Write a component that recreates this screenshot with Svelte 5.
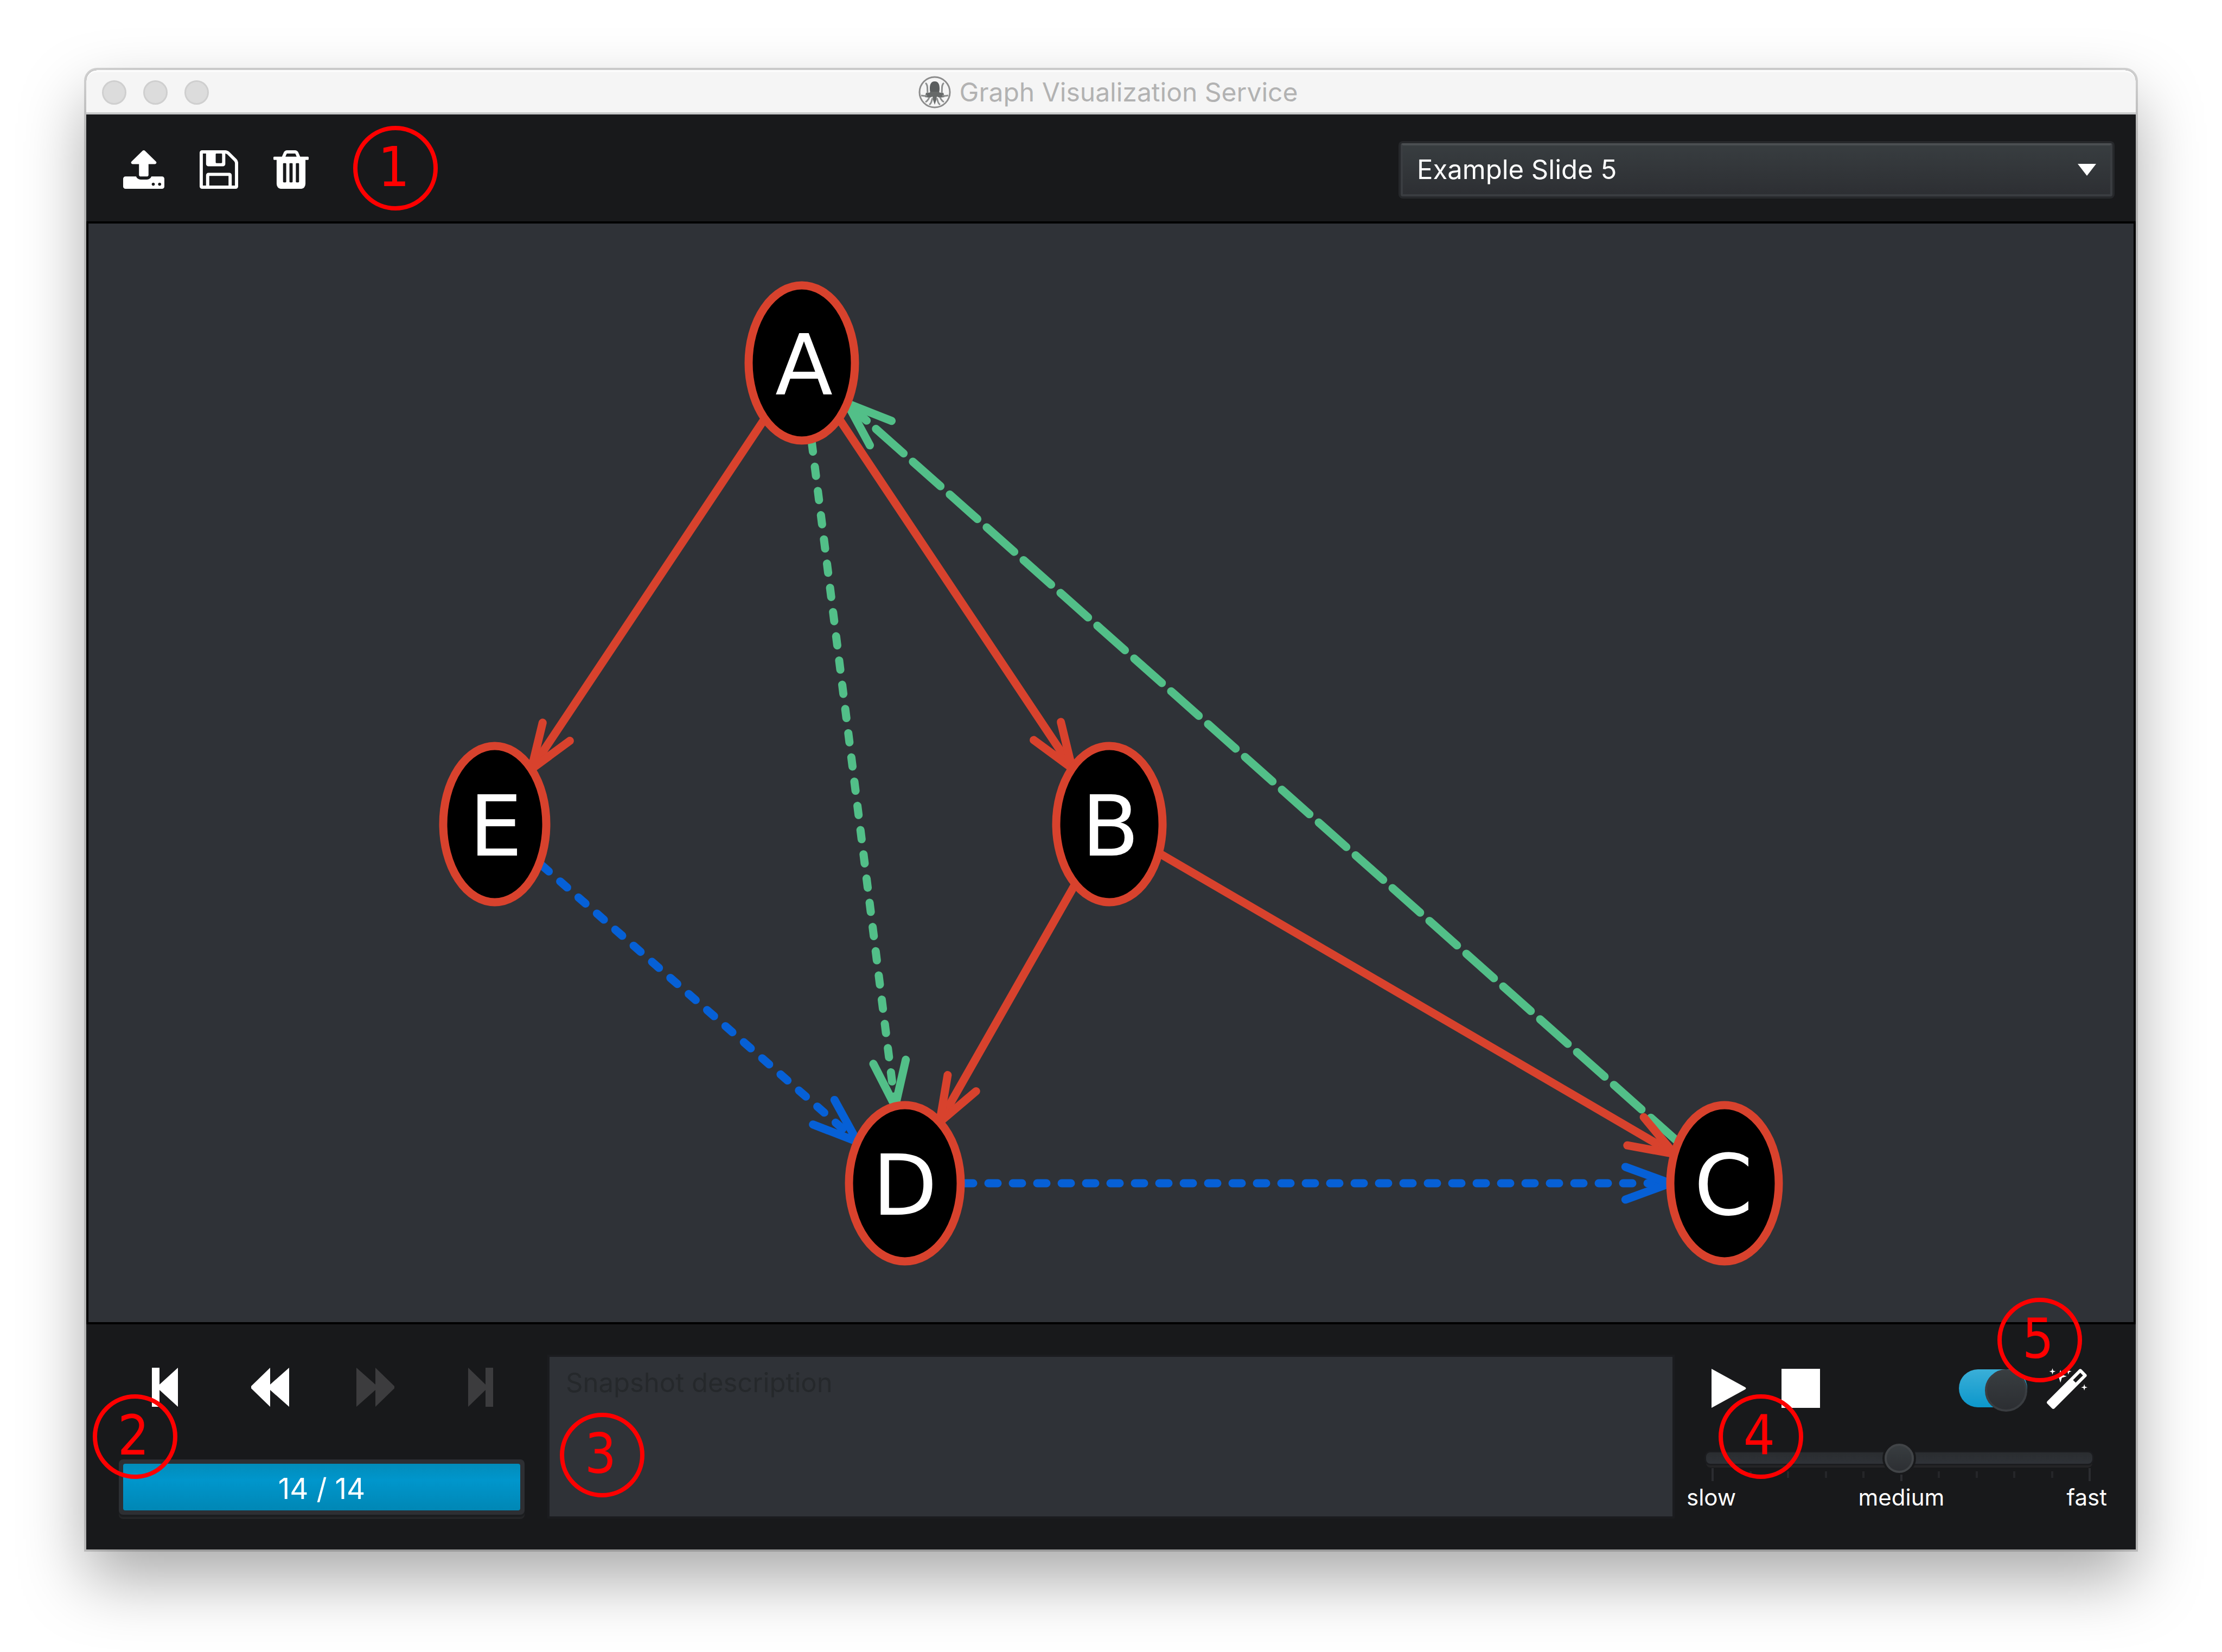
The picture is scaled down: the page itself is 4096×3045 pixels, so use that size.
<script>
  const RING = 15;
  const HEAD = 88;
  const SPREAD = (20 * Math.PI) / 180;

  const nodes = {
    A: { x: 1478, y: 669, rx: 98, ry: 143, labelX: 1482 },
    B: { x: 2045, y: 1519, rx: 98, ry: 144, labelX: 2047 },
    C: { x: 3179, y: 2181, rx: 100, ry: 144, labelX: 3177 },
    D: { x: 1668, y: 2181, rx: 103, ry: 144, labelX: 1668 },
    E: { x: 912, y: 1519, rx: 95, ry: 144, labelX: 914 }
  };

  const edges = [
    { from: 'A', to: 'E', kind: 'solid' },
    { from: 'A', to: 'B', kind: 'solid' },
    { from: 'C', to: 'A', kind: 'dashed' },
    { from: 'A', to: 'D', kind: 'dotted' },
    { from: 'B', to: 'D', kind: 'solid' },
    { from: 'B', to: 'C', kind: 'solid' },
    { from: 'E', to: 'D', kind: 'dotted blue' },
    { from: 'D', to: 'C', kind: 'dotted blue' }
  ];

  // Point where the ray leaving a node's centre at the given angle meets its ring.
  function rim(node, angle) {
    const c = Math.cos(angle);
    const s = Math.sin(angle);
    const t = 1 / Math.hypot(c / node.rx, s / node.ry);
    return { x: node.x + c * t, y: node.y + s * t };
  }

  const lines = edges.map(({ from, to, kind }) => {
    const a = nodes[from];
    const b = nodes[to];
    const angle = Math.atan2(b.y - a.y, b.x - a.x);
    const start = rim(a, angle);
    const tip = rim(b, angle + Math.PI);
    const arm = (side) => {
      const t = angle + Math.PI + side * SPREAD;
      return `${tip.x + HEAD * Math.cos(t)} ${tip.y + HEAD * Math.sin(t)}`;
    };
    return {
      id: from + to,
      kind,
      start,
      tip,
      head: `M${arm(1)}L${tip.x} ${tip.y}L${arm(-1)}`
    };
  });

  const slides = ['Example Slide 1', 'Example Slide 2', 'Example Slide 3', 'Example Slide 4', 'Example Slide 5'];
  let slide = $state('Example Slide 5');
  let description = $state('');
  let speed = $state(50);
  let automatic = $state(true);
  const current = 14;
  const total = 14;
  const ticks = Array.from({ length: 11 }, (_, i) => i);
</script>

<div class="page">
  <main class="window">
    <header class="titlebar">
      <div class="lights"><i></i><i></i><i></i></div>
      <h1>
        <svg class="logo" viewBox="0 0 60 60" aria-hidden="true">
          <circle cx="30" cy="30" r="28" fill="none" stroke="#8c8c8c" stroke-width="3" />
          <path d="M30 10c-7 0-9 6-9 13 0 5 1 7 1 10h16c0-3 1-5 1-10 0-7-2-13-9-13z" fill="#5a5d5e" />
          <path d="M14 31c5 1 7-1 10-2h12c3 1 5 3 10 2l2 8-9 1-5-2-1 6-3 9-3-9-1-6-5 2-9-1z" fill="#666969" />
          <path d="M16 36c-5 2-7 0-11 0M20 40c-3 5-3 6-7 8M26 41c-2 4-1 9-6 12M44 36c5 2 7 0 11 0M40 40c3 5 3 6 7 8M34 41c2 4 1 9 6 12M13 13c5 3 3 11 4 18M47 13c-5 3-3 11-4 18" fill="none" stroke="#8c8e8e" stroke-width="3" />
        </svg>
        Graph Visualization Service
      </h1>
    </header>

    <section class="toolbar">
      <button class="tool" aria-label="Upload">
        <svg width="76" height="71" viewBox="64 64 1664 1600" preserveAspectRatio="none"><path d="M1344 1472q0-26-19-45t-45-19-45 19-19 45 19 45 45 19 45-19 19-45zm256 0q0-26-19-45t-45-19-45 19-19 45 19 45 45 19 45-19 19-45zm128-224v320q0 40-28 68t-68 28h-1472q-40 0-68-28t-28-68v-320q0-40 28-68t68-28h427q21 56 70.500 92t110.500 36h256q61 0 110.500-36t70.500-92h427q40 0 68 28t28 68zm-325-648q-17 40-59 40h-256v448q0 26-19 45t-45 19h-256q-26 0-45-19t-19-45v-448h-256q-42 0-59-40-17-39 14-69l448-448q18-19 45-19t45 19l448 448q31 30 14 69z" /></svg>
      </button>
      <button class="tool" aria-label="Save">
        <svg width="71" height="71" viewBox="0 128 1536 1536"><path d="M384 1536h768v-384h-768v384zM1280 1536h128v-896q0-14-10-38.500t-20-34.500l-281-281q-10-10-34-20t-39-10v416q0 40-28 68t-68 28h-576q-40 0-68-28t-28-68v-416h-128v1280h128v-416q0-40 28-68t68-28h832q40 0 68 28t28 68v416zM896 608v-320q0-13-9.500-22.500t-22.500-9.500h-192q-13 0-22.500 9.500t-9.500 22.500v320q0 13 9.500 22.500t22.500 9.500h192q13 0 22.500-9.500t9.500-22.500zM1536 640v928q0 40-28 68t-68 28h-1344q-40 0-68-28t-28-68v-1344q0-40 28-68t68-28h928q40 0 88 20t76 48l280 280q28 28 48 76t20 88z" /></svg>
      </button>
      <button class="tool" aria-label="Delete">
        <svg width="65" height="71" viewBox="192 128 1408 1536"><path d="M704 1376v-704q0-14-9-23t-23-9h-64q-14 0-23 9t-9 23v704q0 14 9 23t23 9h64q14 0 23-9t9-23zm256 0v-704q0-14-9-23t-23-9h-64q-14 0-23 9t-9 23v704q0 14 9 23t23 9h64q14 0 23-9t9-23zm256 0v-704q0-14-9-23t-23-9h-64q-14 0-23 9t-9 23v704q0 14 9 23t23 9h64q14 0 23-9t9-23zm-544-992h448l-48-117q-7-9-17-11h-317q-10 2-17 11zm928 32v64q0 14-9 23t-23 9h-96v948q0 83-47 143.500t-113 60.500h-832q-66 0-113-58.500t-47-141.500v-952h-96q-14 0-23-9t-9-23v-64q0-14 9-23t23-9h309l70-167q15-37 54-63t79-26h320q40 0 79 26t54 63l70 167h309q14 0 23 9t9 23z" /></svg>
      </button>
      <div class="picker">
        <select aria-label="Slide" bind:value={slide}>
          {#each slides as name}
            <option>{name}</option>
          {/each}
        </select>
        <svg class="arrow" viewBox="0 0 34 22" aria-hidden="true"><path d="M0 0h34L17 22z" /></svg>
      </div>
      <span class="mark mark-1">1</span>
    </section>

    <section class="canvas">
      <svg viewBox="163 412 3770 2025" role="img" aria-label="Graph">
        {#each lines as line (line.id)}
          <g class="edge {line.kind}">
            <line class="shaft" x1={line.start.x} y1={line.start.y} x2={line.tip.x} y2={line.tip.y} />
            <path d={line.head} />
          </g>
        {/each}
        {#each Object.entries(nodes) as [name, node] (name)}
          <ellipse class="node" cx={node.x} cy={node.y} rx={node.rx} ry={node.ry} stroke-width={RING} />
          <text x={node.labelX} y={node.y + 58}>{name}</text>
        {/each}
      </svg>
    </section>

    <footer class="controls">
      <div class="steps">
        <div class="buttons">
          <button aria-label="First"><svg width="48" height="72" viewBox="0 0 48 72"><path d="M0 0h14v31L48 0v72L14 41v31H0z" /></svg></button>
          <button aria-label="Previous"><svg width="70" height="72" viewBox="0 0 70 72"><path d="M0 38v-4L35 0v31L70 0v72L35 41v31z" /></svg></button>
          <button aria-label="Next" disabled><svg width="70" height="72" viewBox="0 0 70 72"><path d="M70 38v-4L35 0v31L0 0v72l35-31v31z" /></svg></button>
          <button aria-label="Last" disabled><svg width="46" height="72" viewBox="0 0 46 72"><path d="M46 0H32v31L0 0v72l32-31v31h14z" /></svg></button>
        </div>
        <div class="progress" role="progressbar" aria-label="Step" aria-valuenow={current} aria-valuemax={total}>
          <div class="fill" style="width: {(current / total) * 100}%">{current} / {total}</div>
        </div>
        <span class="mark mark-2">2</span>
      </div>

      <div class="notes">
        <textarea aria-label="Snapshot description" placeholder="Snapshot description" bind:value={description}></textarea>
        <span class="mark mark-3">3</span>
      </div>

      <div class="playback">
        <div class="row">
          <button aria-label="Play"><svg width="64" height="72" viewBox="0 0 64 72"><path d="M0 0l62 34q3 2 0 4L0 72z" /></svg></button>
          <button aria-label="Stop"><svg width="71" height="72" viewBox="0 0 71 72"><path d="M0 0h71v72H0z" /></svg></button>
          <label class="auto">
            <input type="checkbox" class="switch" aria-label="Automatic layout" bind:checked={automatic} />
            <svg width="75" height="75" viewBox="91 0 1637 1637" aria-hidden="true"><path d="M1254 581l293-293-107-107-293 293zm447-293q0 27-18 45l-1286 1286q-18 18-45 18t-45-18l-198-198q-18-18-18-45t18-45l1286-1286q18-18 45-18t45 18l198 198q18 18 18 45zm-1351-190l98 30-98 30-30 98-30-98-98-30 98-30 30-98zm350 162l196 60-196 60-60 196-60-196-196-60 196-60 60-196zm930 478l98 30-98 30-30 98-30-98-98-30 98-30 30-98zm-640-640l98 30-98 30-30 98-30-98-98-30 98-30 30-98z" /></svg>
          </label>
        </div>
        <input class="speed" type="range" min="0" max="100" aria-label="Speed" bind:value={speed} />
        <div class="ticks">
          {#each ticks as tick}
            <i class:major={tick % 5 === 0}></i>
          {/each}
        </div>
        <div class="scale"><span>slow</span><span>medium</span><span>fast</span></div>
        <span class="mark mark-4">4</span>
        <span class="mark mark-5">5</span>
      </div>
    </footer>
  </main>
</div>

<style>
  :global(body) {
    margin: 0;
    background: #fff;
  }

  .page,
  .page :global(*) {
    box-sizing: border-box;
  }

  .page {
    display: flex;
    min-height: 100vh;
    padding: 129px 159px 189px;
    overflow: hidden;
    font-family: Inter, 'Liberation Sans', sans-serif;
    color: #fff;
  }

  .window {
    flex: 1;
    display: flex;
    flex-direction: column;
    min-width: 0;
    background: #18191b;
    border-radius: 20px 20px 0 0;
    box-shadow:
      0 0 0 4px rgba(0, 0, 0, 0.16),
      0 54px 120px rgba(0, 0, 0, 0.34);
  }

  button {
    display: flex;
    justify-content: center;
    align-items: center;
    margin: 0;
    padding: 0;
    border: 0;
    background: none;
    color: #fff;
  }

  button:disabled {
    color: #3c3c3e;
  }

  svg {
    display: block;
    fill: currentColor;
  }

  .titlebar {
    display: grid;
    grid-template-columns: 1fr auto 1fr;
    align-items: center;
    height: 82px;
    padding: 0 40px 0 29px;
    background: #f5f5f5;
    border-top: 4px solid #fbfbfb;
    border-bottom: 4px solid #c9cacb;
    border-radius: 20px 20px 0 0;
  }

  .lights {
    display: flex;
    gap: 31px;
  }

  .lights i {
    width: 45px;
    height: 45px;
    border: 3px solid #cfcfcf;
    border-radius: 50%;
    background: #dcdcdc;
  }

  h1 {
    display: flex;
    align-items: center;
    gap: 16px;
    margin: 0;
    font-size: 48px;
    line-height: 60px;
    font-weight: 400;
    color: #b2b2b2;
    white-space: nowrap;
  }

  .logo {
    width: 60px;
    height: 60px;
  }

  .toolbar {
    position: relative;
    display: flex;
    align-items: center;
    gap: 65px;
    height: 201px;
    padding: 6px 43px 0 68px;
    border-bottom: 4px solid #000;
  }

  .picker {
    position: relative;
    flex: 0 1 1312px;
    margin-left: auto;
  }

  select {
    appearance: none;
    display: block;
    width: 100%;
    height: 98px;
    padding: 0 80px 0 26px;
    border: 4px solid #3a3d41;
    border-top-color: #4b4f52;
    border-radius: 4px;
    background: linear-gradient(#383d40, #2d2f33);
    box-shadow: 0 0 0 4px #26282b;
    color: #fff;
    font: 49px/60px Inter, 'Liberation Sans', sans-serif;
  }

  .arrow {
    position: absolute;
    top: 38px;
    right: 30px;
    width: 34px;
    height: 22px;
    pointer-events: none;
  }

  .canvas {
    flex: 1;
    min-height: 0;
    display: flex;
    background: #2f3237;
    border: 4px solid #000;
    border-top: 0;
  }

  .canvas svg {
    flex: 1;
    width: 100%;
    height: 100%;
  }

  .edge {
    fill: none;
    stroke: #d8422d;
    stroke-width: 15;
    stroke-linecap: round;
    stroke-linejoin: round;
  }

  .edge.dashed,
  .edge.dotted {
    stroke: #52bf88;
  }

  .edge.dotted.blue {
    stroke: #0660d6;
  }

  .dashed .shaft {
    stroke-dasharray: 68 23;
  }

  .dotted .shaft {
    stroke-dasharray: 17 28;
    stroke-dashoffset: -6;
  }

  .node {
    fill: #000;
    stroke: #d8422d;
  }

  .canvas text {
    fill: #fff;
    font: 155px 'DejaVu Sans', sans-serif;
    text-anchor: middle;
  }

  .controls {
    display: flex;
    height: 415px;
    padding: 60px 53px 61px 60px;
  }

  .steps {
    position: relative;
    display: flex;
    flex-direction: column;
    justify-content: space-between;
    width: 748px;
    margin-right: 46px;
    padding: 20px 0 3px;
  }

  .buttons {
    display: grid;
    grid-template-columns: repeat(4, 1fr);
    margin: 0 -16px 0 -12px;
  }

  .progress {
    height: 102px;
    padding: 8px;
    border-radius: 8px;
    background: #2d2f33;
    box-shadow: 0 4px 0 #1b1d1f, 0 8px 0 #242527;
  }

  .fill {
    height: 100%;
    border-radius: 4px;
    background: linear-gradient(#028cba, #0096cc 35%, #0087b5);
    font-size: 53px;
    line-height: 92px;
    text-align: center;
    white-space: nowrap;
  }

  .notes {
    position: relative;
    flex: 1;
    display: flex;
    min-width: 0;
    margin-right: 26px;
  }

  textarea {
    flex: 1;
    min-width: 0;
    padding: 18px 30px;
    border: 0;
    background: #2f3237;
    box-shadow: 0 0 0 4px #1b1c1f;
    color: #fff;
    font: 49px/60px Inter, 'Liberation Sans', sans-serif;
    resize: none;
  }

  textarea::placeholder {
    color: #25282b;
    opacity: 1;
  }

  .playback {
    position: relative;
    display: flex;
    flex-direction: column;
    width: 775px;
    padding-top: 20px;
  }

  .row {
    display: flex;
    align-items: center;
    gap: 65px;
    height: 76px;
    padding: 0 36px 0 46px;
  }

  .auto {
    display: flex;
    align-items: center;
    gap: 36px;
    margin-left: auto;
  }

  .switch {
    appearance: none;
    display: flex;
    justify-content: flex-end;
    width: 126px;
    height: 70px;
    margin: 0;
    border-radius: 35px;
    background: linear-gradient(#3aafd8, #0c97cb);
  }

  .switch::before {
    content: '';
    width: 70px;
    height: 70px;
    border: 4px solid #3a3d41;
    border-radius: 50%;
    background: linear-gradient(#383d40, #2c2e32);
  }

  .switch:not(:checked) {
    justify-content: flex-start;
    background: #2d2f33;
  }

  .speed {
    appearance: none;
    height: 54px;
    margin: 63px 27px 0 36px;
    background: none;
  }

  .speed::-webkit-slider-runnable-track {
    height: 21px;
    border-radius: 8px;
    background: linear-gradient(#2a2d30, #2f3237);
    box-shadow: 0 0 0 3px #1b1c1f, 0 7px 0 #242426;
  }

  .speed::-webkit-slider-thumb {
    appearance: none;
    width: 54px;
    height: 54px;
    margin-top: -16px;
    border: 4px solid #414447;
    border-radius: 50%;
    background: linear-gradient(#383d40, #2d2f33);
    box-shadow: 0 0 0 4px #18191b;
  }

  .ticks {
    display: flex;
    justify-content: space-between;
    align-items: center;
    height: 24px;
    margin: -8px 30px 0 46px;
  }

  .ticks i {
    width: 4px;
    height: 12px;
    background: #252629;
  }

  .ticks .major {
    height: 24px;
    background: #2b2c30;
  }

  .ticks .major:nth-child(6) {
    height: 12px;
    align-self: flex-end;
  }

  .scale {
    display: flex;
    justify-content: space-between;
    margin-top: 6px;
    font-size: 42px;
    line-height: 48px;
  }

  .mark {
    position: absolute;
    width: 156px;
    height: 156px;
    padding-right: 6px;
    border: 8px solid #f00;
    border-radius: 50%;
    color: #f00;
    font: 102px/136px 'DejaVu Sans Condensed', 'DejaVu Sans', sans-serif;
    text-align: center;
  }

  .mark-1 {
    top: 21px;
    left: 492px;
  }

  .mark-2 {
    top: 69px;
    left: -48px;
  }

  .mark-3 {
    top: 103px;
    left: 19px;
  }

  .mark-4 {
    top: 69px;
    left: 59px;
  }

  .mark-5 {
    top: -109px;
    right: 46px;
  }
</style>
